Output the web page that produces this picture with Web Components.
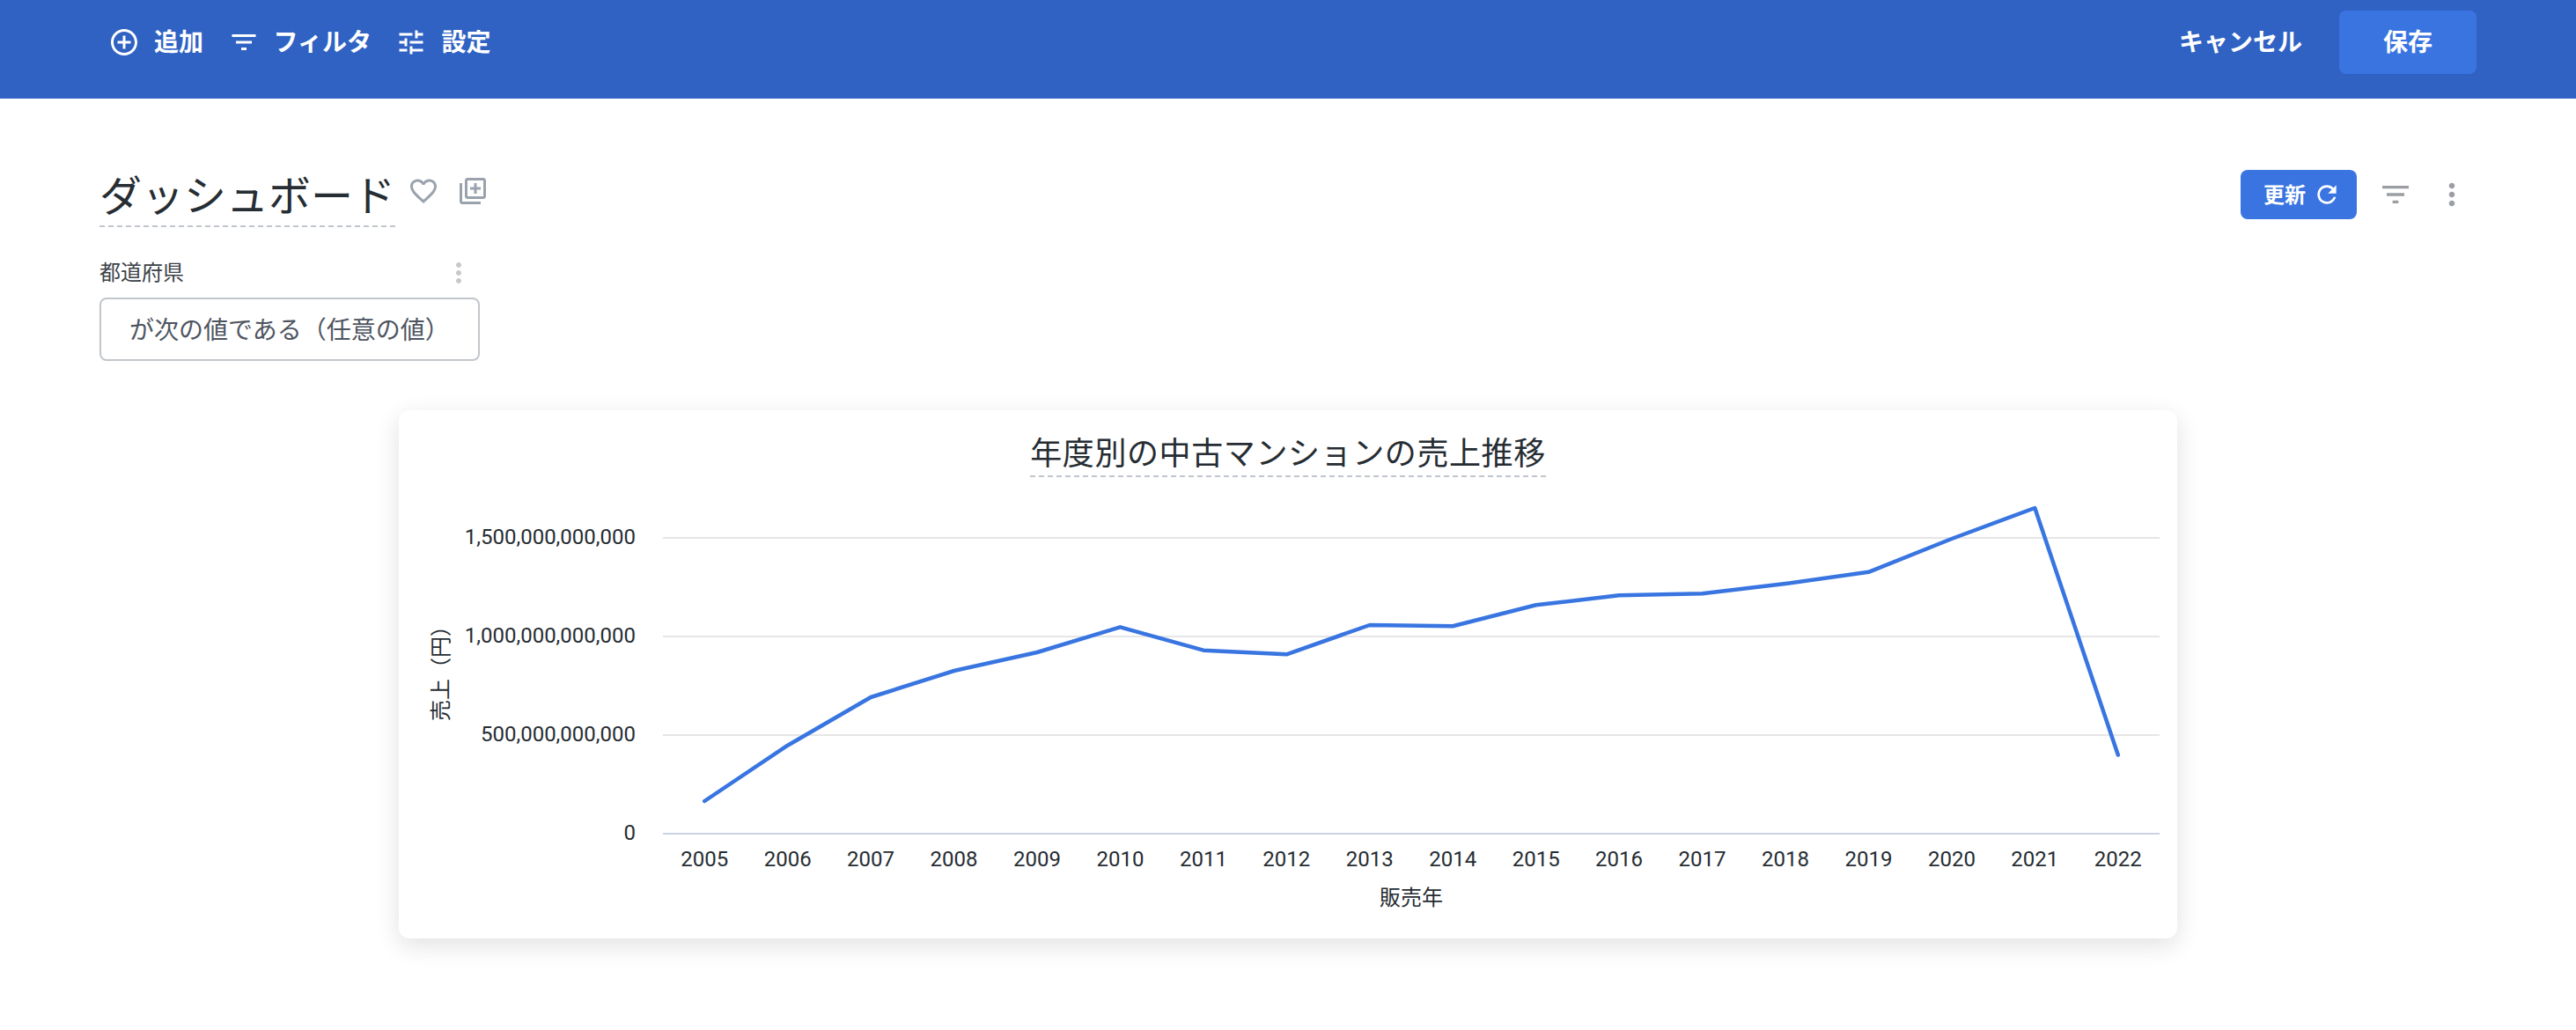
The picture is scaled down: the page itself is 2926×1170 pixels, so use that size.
<!DOCTYPE html>
<html lang="ja">
<head>
<meta charset="utf-8">
<title>ダッシュボード</title>
<style>
  body {
    margin: 0;
    background: #fff;
    font-family: Roboto, "Noto Sans CJK JP", sans-serif;
    color: #262d33;
  }
</style>
</head>
<body>
<dash-toolbar>
  <tool-item slot="left" icon="add">追加</tool-item>
  <tool-item slot="left" icon="filter">フィルタ</tool-item>
  <tool-item slot="left" icon="tune">設定</tool-item>
  <span slot="right">キャンセル</span>
  <save-button slot="right">保存</save-button>
</dash-toolbar>
<dash-main>
  <dash-title slot="head">ダッシュボード</dash-title>
  <dash-actions slot="actions"></dash-actions>
  <filter-control slot="filter" label="都道府県">が次の値である（任意の値）</filter-control>
  <chart-card title-text="年度別の中古マンションの売上推移">
    <line-chart></line-chart>
  </chart-card>
</dash-main>

<script>
const ICONS = {
  add: "M13 7h-2v4H7v2h4v4h2v-4h4v-2h-4V7zm-1-5C6.48 2 2 6.48 2 12s4.48 10 10 10 10-4.48 10-10S17.52 2 12 2zm0 18c-4.41 0-8-3.59-8-8s3.59-8 8-8 8 3.59 8 8-3.59 8-8 8z",
  filter: "M10 18h4v-2h-4v2zM3 6v2h18V6H3zm3 7h12v-2H6v2z",
  tune: "M3 17v2h6v-2H3zM3 5v2h10V5H3zm10 16v-2h8v-2h-8v-2h-2v6h2zM7 9v2H3v2h4v2h2V9H7zm14 4v-2H11v2h10zm-6-4h2V7h4V5h-4V3h-2v6z",
  refresh: "M17.65 6.35C16.2 4.9 14.21 4 12 4c-4.42 0-7.99 3.58-7.99 8s3.57 8 7.99 8c3.73 0 6.84-2.55 7.73-6h-2.08c-.82 2.33-3.04 4-5.65 4-3.31 0-6-2.69-6-6s2.69-6 6-6c1.66 0 3.14.69 4.22 1.78L13 11h7V4l-2.35 2.35z",
  more: "M12 8c1.1 0 2-.9 2-2s-.9-2-2-2-2 .9-2 2 .9 2 2 2zm0 2c-1.1 0-2 .9-2 2s.9 2 2 2 2-.9 2-2-.9-2-2-2zm0 6c-1.1 0-2 .9-2 2s.9 2 2 2 2-.9 2-2-.9-2-2-2z",
  heart: "M16.5 3c-1.74 0-3.41.81-4.5 2.09C10.91 3.81 9.24 3 7.5 3 4.42 3 2 5.42 2 8.5c0 3.78 3.4 6.86 8.55 11.54L12 21.35l1.45-1.32C18.6 15.36 22 12.28 22 8.5 22 5.42 19.58 3 16.5 3zm-4.4 15.55l-.1.1-.1-.1C7.14 14.24 4 11.39 4 8.5 4 6.5 5.5 5 7.5 5c1.54 0 3.04.99 3.57 2.36h1.87C13.46 5.99 14.96 5 16.5 5c2 0 3.5 1.5 3.5 3.5 0 2.89-3.14 5.74-7.9 10.05z",
  library: "M4 6H2v14c0 1.1.9 2 2 2h14v-2H4V6zm16-4H8c-1.1 0-2 .9-2 2v12c0 1.1.9 2 2 2h12c1.1 0 2-.9 2-2V4c0-1.1-.9-2-2-2zm0 14H8V4h12v12zm-7-2h2v-3h3V9h-3V6h-2v3h-3v2h3z"
};

class UiIcon extends HTMLElement {
  connectedCallback() {
    const size = this.getAttribute("size") || 36;
    const color = this.getAttribute("color") || "currentColor";
    this.attachShadow({ mode: "open" }).innerHTML = `
      <style>
        :host { display: block; width: ${size}px; height: ${size}px; flex: none; }
        svg { display: block; width: 100%; height: 100%; fill: ${color}; }
      </style>
      <svg viewBox="0 0 24 24"><path d="${ICONS[this.getAttribute("name")]}"/></svg>
    `;
  }
}

class ToolItem extends HTMLElement {
  connectedCallback() {
    this.attachShadow({ mode: "open" }).innerHTML = `
      <style>
        :host {
          display: flex;
          align-items: center;
          gap: 16px;
          font-size: 28px;
          font-weight: 700;
          color: #fff;
        }
        span { padding-bottom: 5px; }
      </style>
      <ui-icon name="${this.getAttribute("icon")}"></ui-icon>
      <span><slot></slot></span>
    `;
  }
}

class SaveButton extends HTMLElement {
  connectedCallback() {
    this.attachShadow({ mode: "open" }).innerHTML = `
      <style>
        :host {
          display: flex;
          align-items: center;
          justify-content: center;
          box-sizing: border-box;
          width: 156px;
          height: 72px;
          padding-bottom: 4px;
          border-radius: 8px;
          background: #3a74e1;
          color: #fff;
          font-size: 28px;
          font-weight: 700;
        }
      </style>
      <slot></slot>
    `;
  }
}

class DashToolbar extends HTMLElement {
  connectedCallback() {
    this.attachShadow({ mode: "open" }).innerHTML = `
      <style>
        :host {
          display: flex;
          justify-content: space-between;
          align-items: center;
          box-sizing: border-box;
          height: 112px;
          padding: 0 113px 16px 123px;
          background: #2f62c3;
          color: #fff;
        }
        .group { display: flex; align-items: center; }
        .left { gap: 27.5px; }
        .right { gap: 42px; font-size: 28px; font-weight: 700; }
        .right ::slotted(span) { padding-bottom: 4px; }
      </style>
      <div class="group left"><slot name="left"></slot></div>
      <div class="group right"><slot name="right"></slot></div>
    `;
  }
}

class DashMain extends HTMLElement {
  connectedCallback() {
    this.attachShadow({ mode: "open" }).innerHTML = `
      <style>
        :host { display: block; box-sizing: border-box; padding: 76px 113px 104px; }
        .top { display: flex; justify-content: space-between; align-items: flex-start; padding-right: 8px; }
        .filter { margin-top: 34px; }
        .chart { display: flex; justify-content: center; margin-top: 56px; }
      </style>
      <div class="top"><slot name="head"></slot><slot name="actions"></slot></div>
      <div class="filter"><slot name="filter"></slot></div>
      <div class="chart"><slot></slot></div>
    `;
  }
}

class DashTitle extends HTMLElement {
  connectedCallback() {
    this.attachShadow({ mode: "open" }).innerHTML = `
      <style>
        :host { display: flex; align-items: flex-start; }
        h1 {
          margin: 0;
          padding-top: 4px;
          font-size: 48px;
          font-weight: 400;
          line-height: 64px;
          color: #262d33;
          border-bottom: 2px dashed #c1c6cc;
        }
        .icons { display: flex; gap: 20px; margin: 11px 0 0 14px; }
      </style>
      <h1><slot></slot></h1>
      <div class="icons">
        <ui-icon name="heart" color="#9aa3ad"></ui-icon>
        <ui-icon name="library" color="#9aa3ad"></ui-icon>
      </div>
    `;
  }
}

class DashActions extends HTMLElement {
  connectedCallback() {
    this.attachShadow({ mode: "open" }).innerHTML = `
      <style>
        :host { display: flex; align-items: center; gap: 24px; margin-top: 5px; }
        button {
          display: flex;
          align-items: center;
          gap: 8px;
          box-sizing: border-box;
          height: 56px;
          padding: 0 18px 0 26px;
          border: 0;
          border-radius: 8px;
          background: #3a74e1;
          color: #fff;
          font: 700 24px Roboto, "Noto Sans CJK JP", sans-serif;
        }
        button span { padding-bottom: 3px; }
      </style>
      <button><span>更新</span><ui-icon name="refresh" size="32"></ui-icon></button>
      <ui-icon name="filter" size="40" color="#9b9ea3"></ui-icon>
      <ui-icon name="more" size="40" color="#9b9ea3"></ui-icon>
    `;
  }
}

class FilterControl extends HTMLElement {
  connectedCallback() {
    this.attachShadow({ mode: "open" }).innerHTML = `
      <style>
        :host { display: inline-block; }
        .label {
          display: flex;
          justify-content: space-between;
          align-items: center;
          height: 36px;
          padding-right: 6px;
          font-size: 24px;
          color: #3c4248;
        }
        .label span { line-height: 32px; padding-bottom: 1px; }
        .box {
          margin-top: 10px;
          box-sizing: border-box;
          height: 72px;
          padding: 0 32px 3px;
          display: flex;
          align-items: center;
          border: 2px solid #c1c6cc;
          border-radius: 8px;
          font-size: 28px;
          color: #4e5561;
          white-space: nowrap;
        }
      </style>
      <div class="label">
        <span>${this.getAttribute("label")}</span>
        <ui-icon name="more" color="#c6c9cd"></ui-icon>
      </div>
      <div class="box"><slot></slot></div>
    `;
  }
}

class ChartCard extends HTMLElement {
  connectedCallback() {
    this.attachShadow({ mode: "open" }).innerHTML = `
      <style>
        :host {
          display: flex;
          flex-direction: column;
          align-items: center;
          width: 2020px;
          height: 600px;
          border-radius: 12px;
          background: #fff;
          box-shadow: 0 8px 28px rgba(0, 0, 0, .12);
        }
        h2 {
          margin: 22px 0 0;
          padding-top: 4px;
          font-size: 36px;
          font-weight: 400;
          line-height: 48px;
          letter-spacing: .6px;
          color: #262d33;
          border-bottom: 2px dashed #c1c6cc;
        }
      </style>
      <h2>${this.getAttribute("title-text")}</h2>
      <slot></slot>
    `;
  }
}

// chart coordinates below are page pixels, the viewBox takes care of the offset
const SERIES = [
  [2005, 910], [2006, 846.7], [2007, 792], [2008, 762], [2009, 741], [2010, 712.3],
  [2011, 738.7], [2012, 743.3], [2013, 710], [2014, 711.3], [2015, 687.3], [2016, 676.3],
  [2017, 674.3], [2018, 663], [2019, 649.8], [2020, 612], [2021, 577], [2022, 857.5]
];
const TICKS = [
  [611, "1,500,000,000,000"],
  [723, "1,000,000,000,000"],
  [835, "500,000,000,000"],
  [947, "0"]
];

class LineChart extends HTMLElement {
  connectedCallback() {
    const left = 753, right = 2453;
    const step = (right - left) / SERIES.length;
    const xOf = (i) => left + step * (i + 0.5);
    const points = SERIES.map((d, i) => `${xOf(i).toFixed(1)},${d[1]}`).join(" ");
    const grid = TICKS.map(([y, label]) => `
      <line x1="${left}" x2="${right}" y1="${y}" y2="${y}" stroke="${label === "0" ? "#c9d2e6" : "#e6e6e6"}" stroke-width="2"/>
      <text x="722" y="${y + 7}" text-anchor="end">${label}</text>`).join("");
    const years = SERIES.map((d, i) =>
      `<text x="${xOf(i).toFixed(1)}" y="984" text-anchor="middle">${d[0]}</text>`).join("");
    this.attachShadow({ mode: "open" }).innerHTML = `
      <style>
        :host { display: block; width: 2020px; height: 524px; }
        svg { display: block; }
        text { font: 400 24px Roboto, "Noto Sans CJK JP", sans-serif; fill: #262d33; }
      </style>
      <svg width="2020" height="524" viewBox="453 542 2020 524">
        ${grid}
        ${years}
        <text x="1603" y="1028" text-anchor="middle">販売年</text>
        <text transform="translate(509 759) rotate(-90)" text-anchor="middle">売上（円）</text>
        <polyline points="${points}" fill="none" stroke="#3975e1" stroke-width="4.5" stroke-linejoin="round" stroke-linecap="round"/>
      </svg>
    `;
  }
}

customElements.define("ui-icon", UiIcon);
customElements.define("tool-item", ToolItem);
customElements.define("save-button", SaveButton);
customElements.define("dash-toolbar", DashToolbar);
customElements.define("dash-main", DashMain);
customElements.define("dash-title", DashTitle);
customElements.define("dash-actions", DashActions);
customElements.define("filter-control", FilterControl);
customElements.define("chart-card", ChartCard);
customElements.define("line-chart", LineChart);
</script>
</body>
</html>
